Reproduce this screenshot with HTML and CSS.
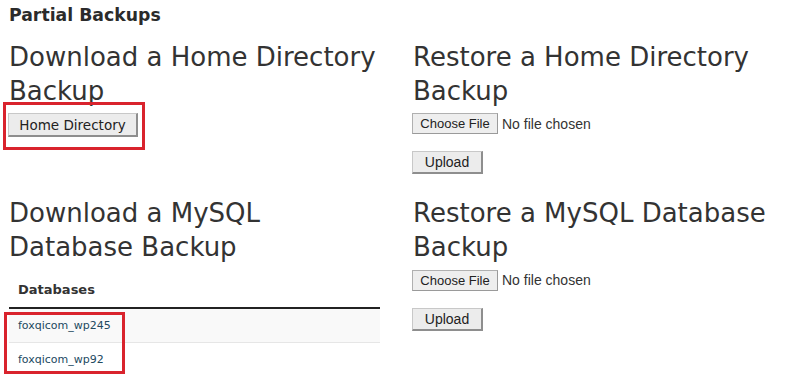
FILE: index.html
```html
<!DOCTYPE html>
<html>
<head>
<meta charset="utf-8">
<link rel="stylesheet" href="styles.css">
</head>
<body>
<div class="page">
  <h2 class="title">Partial Backups</h2>
  <div class="grid">
    <section class="cell">
      <h3 class="heading">Download a Home Directory Backup</h3>
      <div class="annot-wrap">
        <button class="btn-home">Home Directory</button>
        <span class="annot annot-home"></span>
      </div>
    </section>
    <section class="cell">
      <h3 class="heading">Restore a Home Directory Backup</h3>
      <div class="file-row"><span class="btn-file">Choose File</span><span class="file-label">No file chosen</span></div>
      <button class="btn-upload">Upload</button>
    </section>
    <section class="cell">
      <h3 class="heading">Download a MySQL Database Backup</h3>
      <div class="annot-wrap">
        <table class="db-table">
          <thead><tr><th>Databases</th></tr></thead>
          <tbody>
            <tr class="odd"><td><a href="#">foxqicom_wp245</a></td></tr>
            <tr><td><a href="#">foxqicom_wp92</a></td></tr>
          </tbody>
        </table>
        <span class="annot annot-db"></span>
      </div>
    </section>
    <section class="cell">
      <h3 class="heading">Restore a MySQL Database Backup</h3>
      <div class="file-row"><span class="btn-file">Choose File</span><span class="file-label">No file chosen</span></div>
      <button class="btn-upload">Upload</button>
    </section>
  </div>
</div>
</body>
</html>
```
FILE: styles.css
```css
html, body { margin: 0; padding: 0; background: #fff; }
body { font-family: "DejaVu Sans", Verdana, sans-serif; color: #333; }
.page { padding: 5px 0 0 9px; width: 791px; box-sizing: border-box; }
.title { margin: 0 0 16px; font-size: 17.3px; line-height: 20px; font-weight: bold; color: #2b2b2b; }
.grid { display: grid; grid-template-columns: 371px 370px; column-gap: 33px; row-gap: 23px; }
.cell { display: flex; flex-direction: column; align-items: flex-start; }
.heading { margin: 0; font-size: 26px; line-height: 33.7px; font-weight: normal; color: #333; }
.cell:nth-child(1) .heading, .cell:nth-child(2) .heading { width: 371px; }
.annot-wrap { position: relative; width: 100%; }
.btn-home {
  margin: 5px 0 0 -1px; height: 24px; width: 130px; padding: 0;
  font-family: "DejaVu Sans", Verdana, sans-serif; font-size: 13.5px; color: #222;
  background: #ececec; border: 1px solid #c8c8c8; border-right-color: #8e8e8e; border-bottom-color: #8e8e8e;
  border-width: 1px 2px 2px 1px; box-sizing: border-box; display: block;
}
.annot { position: absolute; border: 3px solid #d9232d; box-sizing: border-box; pointer-events: none; }
.annot-home { left: -6px; top: -6px; width: 142px; height: 48px; }
.annot-db { left: -5px; top: 47px; width: 121px; height: 62px; }
.file-row { display: flex; align-items: center; margin-top: 5px; height: 21px; margin-left: -1px; }
.btn-file {
  display: inline-flex; align-items: center; justify-content: center; box-sizing: border-box;
  width: 86px; height: 21px; font-family: "Liberation Sans", Arial, sans-serif; font-size: 13px; color: #222;
  background: #eeeeee; border: 1px solid #b0b0b0; border-right-color: #9a9a9a; border-bottom-color: #9a9a9a;
}
.file-label { margin-left: 4px; font-family: "Liberation Sans", Arial, sans-serif; font-size: 14px; color: #333; }
.btn-upload {
  margin: 17px 0 0 -1px; width: 71px; height: 23px; padding: 0; box-sizing: border-box;
  font-family: "Liberation Sans", Arial, sans-serif; font-size: 14px; color: #222;
  background: #ececec; border: 1px solid #c8c8c8; border-right-color: #8e8e8e; border-bottom-color: #8e8e8e;
  border-width: 1px 2px 2px 1px;
}
.db-table { margin-top: 8px; width: 371px; border-collapse: collapse; }
.db-table th {
  text-align: left; font-size: 13px; font-weight: bold; line-height: 16px; color: #333;
  padding: 9px 9px 9px; border-bottom: 2px solid #222;
}
.db-table td { padding: 10px 9px 9px; font-size: 11px; line-height: 14px; border-bottom: 1px solid #e6e6e6; }
.db-table tr.odd td { background: #f9f9f9; }
.db-table tbody tr:last-child td { border-bottom: none; }
.db-table a { color: #22495f; text-decoration: none; }
```
